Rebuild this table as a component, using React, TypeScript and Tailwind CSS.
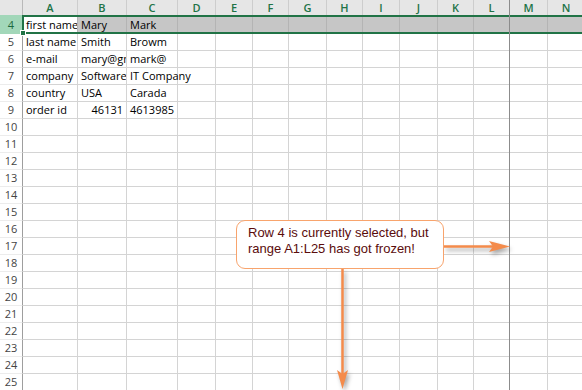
import React from "react";

type Cell = { v: string; right?: boolean; overflow?: boolean } | null;

const COLS = ["A", "B", "C", "D", "E", "F", "G", "H", "I", "J", "K", "L", "M", "N"];

const DATA: Record<number, Cell[]> = {
  5: [{ v: "last name" }, { v: "Smith" }, { v: "Browm" }],
  6: [{ v: "e-mail" }, { v: "mary@gmail.com" }, { v: "mark@" }],
  7: [{ v: "company" }, { v: "Software Inc" }, { v: "IT Company", overflow: true }],
  8: [{ v: "country" }, { v: "USA" }, { v: "Carada" }],
  9: [{ v: "order id" }, { v: "46131", right: true }, { v: "4613985", right: true }],
};

const ROW4: string[] = ["first name", "Mary", "Mark"];

const ROWS = Array.from({ length: 21 }, (_, i) => i + 5);

export default function App() {
  return (
    <div className="relative w-[582px] h-[390px] overflow-hidden bg-white font-['Open_Sans',sans-serif] text-[11px] text-black">
      <div className="grid grid-cols-[23px_55px_49px_51px_38px_37px_36px_38px_36px_37px_38px_36px_36px_38px_37px] w-[585px]">
        {/* header row */}
        <div className="h-[15px] bg-[#e6e6e6] border-r border-[#b9b9b9]" />
        {COLS.map((c) => (
          <div
            key={c}
            className={
              c === "L"
                ? "h-[15px] bg-[#e6e6e6] border-r border-[#8c8c8c] text-center leading-[15px] text-[#217346] font-semibold"
                : "h-[15px] bg-[#e6e6e6] border-r border-[#cdcdcd] text-center leading-[15px] text-[#217346] font-semibold"
            }
          >
            {c}
          </div>
        ))}

        {/* row 4 (selected) */}
        <div className="h-[19px] bg-[#a2d7b9] border-r border-[#9e9e9e] text-center pt-[2px] leading-[15px] text-[#1b6a3e]">
          4
        </div>
        {COLS.map((c, i) => (
          <div
            key={c}
            className={
              i === 0
                ? "h-[19px] bg-white border-r border-[#b4b4b4] pt-[2px] pl-[3px] leading-[15px] whitespace-nowrap overflow-hidden"
                : c === "L"
                ? "h-[19px] bg-[#c6c6c6] border-r border-[#8c8c8c] pt-[2px] pl-[3px] leading-[15px] whitespace-nowrap overflow-hidden"
                : "h-[19px] bg-[#c6c6c6] border-r border-[#b4b4b4] pt-[2px] pl-[3px] leading-[15px] whitespace-nowrap overflow-hidden"
            }
          >
            {ROW4[i] ?? ""}
          </div>
        ))}

        {/* rows 5..25 */}
        {ROWS.map((r) => (
          <React.Fragment key={r}>
            <div className="h-[17px] bg-white border-r border-b border-r-[#9e9e9e] border-b-[#ececec] text-center leading-[16px] text-[#444444]">
              {r}
            </div>
            {COLS.map((c, i) => {
              const cell = DATA[r]?.[i] ?? null;
              let cls =
                c === "L"
                  ? "h-[17px] border-r border-b border-r-[#8c8c8c] border-b-[#d4d4d4] leading-[16px] whitespace-nowrap"
                  : "h-[17px] border-r border-b border-[#d4d4d4] leading-[16px] whitespace-nowrap";
              if (cell?.overflow) cls += " overflow-visible pl-[3px]";
              else if (cell?.right) cls += " overflow-hidden text-right pr-[3px]";
              else cls += " overflow-hidden pl-[3px]";
              return (
                <div key={c} className={cls}>
                  {cell?.v ?? ""}
                </div>
              );
            })}
          </React.Fragment>
        ))}
      </div>

      {/* selection outline of row 4 */}
      <div className="absolute left-[22px] top-[15px] w-[580px] h-[19px] border-2 border-r-0 border-[#217346]" />
      {/* freeze line through selection */}
      <div className="absolute left-[509px] top-0 w-px h-[390px] bg-[#8c8c8c]" />
      {/* fill handle */}
      <div className="absolute left-[20px] top-[30px] w-[6px] h-[6px] bg-[#217346] border border-white" />

      {/* callout */}
      <div className="absolute left-[236px] top-[220px] w-[208px] h-[49px] rounded-[9px] border-[1.5px] border-[#f8a46d] bg-white pt-[4px] pl-[11px] font-['Liberation_Sans',Arial,sans-serif] text-[13px] leading-[16px] text-[#5a0c0c]">
        <div>Row 4 is currently selected, but</div>
        <div>range A1:L25 has got frozen!</div>
      </div>

      {/* arrows */}
      <svg
        className="absolute left-0 top-0 drop-shadow-[2px_3px_2px_rgba(0,0,0,0.35)]"
        width="582"
        height="390"
        viewBox="0 0 582 390"
      >
        <line x1="444" y1="246.5" x2="494" y2="246.5" stroke="#f48b4b" strokeWidth="2.5" />
        <polygon points="489,241 510,246.5 489,252 493,246.5" fill="#f48b4b" />
        <line x1="342.5" y1="269" x2="342.5" y2="376" stroke="#f48b4b" strokeWidth="2.5" />
        <polygon points="337,370 342.5,389 348,370 342.5,374" fill="#f48b4b" />
      </svg>
    </div>
  );
}
